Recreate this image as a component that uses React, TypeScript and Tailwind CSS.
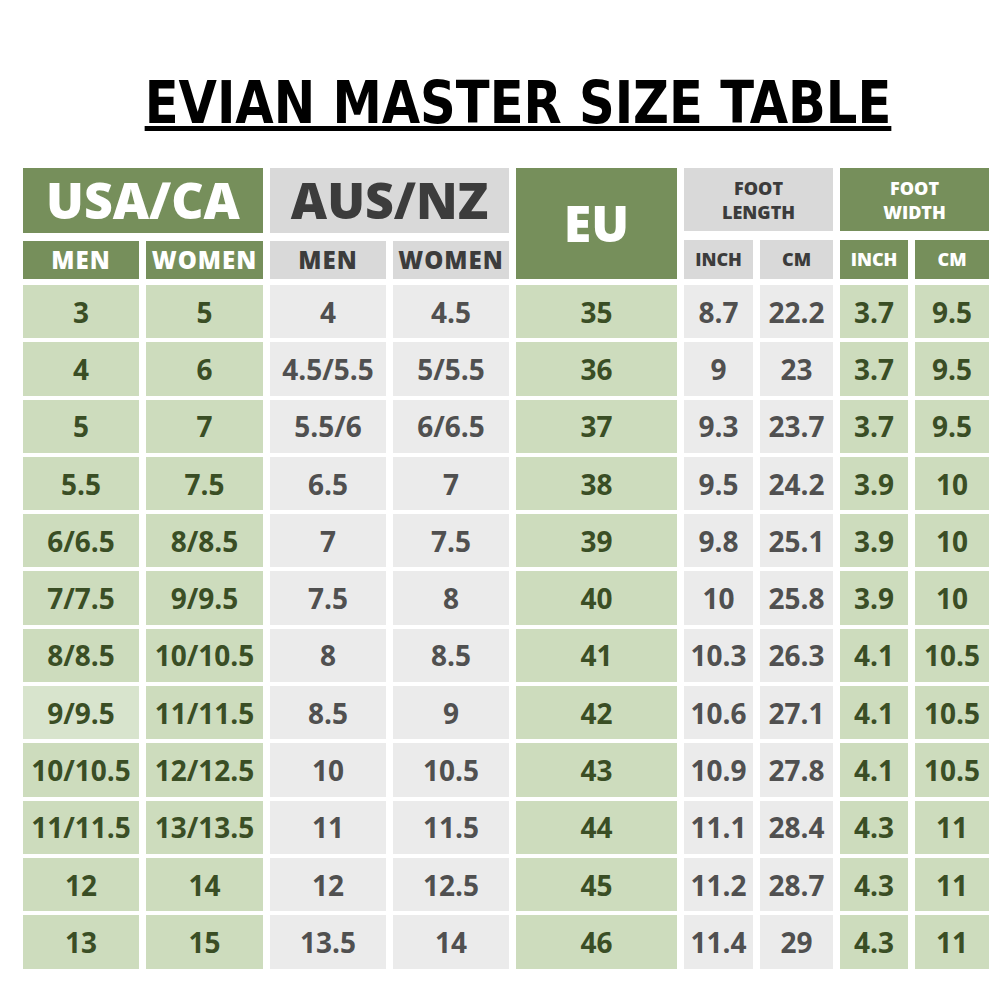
const usaMen = ['3', '4', '5', '5.5', '6/6.5', '7/7.5', '8/8.5', '9/9.5', '10/10.5', '11/11.5', '12', '13']
const usaWomen = ['5', '6', '7', '7.5', '8/8.5', '9/9.5', '10/10.5', '11/11.5', '12/12.5', '13/13.5', '14', '15']
const ausMen = ['4', '4.5/5.5', '5.5/6', '6.5', '7', '7.5', '8', '8.5', '10', '11', '12', '13.5']
const ausWomen = ['4.5', '5/5.5', '6/6.5', '7', '7.5', '8', '8.5', '9', '10.5', '11.5', '12.5', '14']
const eu = ['35', '36', '37', '38', '39', '40', '41', '42', '43', '44', '45', '46']
const lenInch = ['8.7', '9', '9.3', '9.5', '9.8', '10', '10.3', '10.6', '10.9', '11.1', '11.2', '11.4']
const lenCm = ['22.2', '23', '23.7', '24.2', '25.1', '25.8', '26.3', '27.1', '27.8', '28.4', '28.7', '29']
const widInch = ['3.7', '3.7', '3.7', '3.9', '3.9', '3.9', '4.1', '4.1', '4.1', '4.3', '4.3', '4.3']
const widCm = ['9.5', '9.5', '9.5', '10', '10', '10', '10.5', '10.5', '10.5', '11', '11', '11']

const cols = 'grid grid-cols-[116px_117px_116px_116px_161px_69px_73px_68px_74px] gap-x-[7px]'

function Green({ v, light }: { v: string; light?: boolean }) {
  return (
    <div
      className={`h-[53.3px] flex items-center justify-center text-[28px] font-bold text-[#3a4e25] ${light ? 'bg-[#d8e4cd]' : 'bg-[#cddcbd]'}`}
    >
      {v}
    </div>
  )
}

function Gray({ v }: { v: string }) {
  return (
    <div className="h-[53.3px] flex items-center justify-center bg-[#ebebeb] text-[28px] font-bold text-[#505050]">
      {v}
    </div>
  )
}

export default function App() {
  return (
    <div className="w-[1000px] h-[1000px] bg-white" style={{ fontFamily: '"Open Sans", sans-serif' }}>
      {/* Title */}
      <div className="flex justify-center pt-[80px] pl-[36px]">
        <h1
          className="inline-block border-b-[5px] border-black text-[58px] font-bold leading-[46px] text-black scale-x-[0.95]"
          style={{ fontFamily: '"DejaVu Sans Condensed", "DejaVu Sans", sans-serif' }}
        >
          EVIAN MASTER SIZE TABLE
        </h1>
      </div>

      <div className="pl-[23px] pt-[37px]">
        {/* Header */}
        <div className={`${cols} grid-rows-[65px_38px] gap-y-[8px]`}>
          <div className="col-span-2 bg-[#768f5b] flex items-center justify-center text-[50px] font-extrabold text-white">
            USA/CA
          </div>
          <div className="col-span-2 bg-[#d9d9d9] flex items-center justify-center text-[50px] font-extrabold text-[#3c3c3c]">
            AUS/NZ
          </div>
          <div className="row-span-2 bg-[#768f5b] flex items-center justify-center text-[50px] font-extrabold text-white">
            EU
          </div>
          <div className="col-span-2 bg-[#d9d9d9] flex flex-col items-center justify-center text-[18px] leading-[24px] font-extrabold text-[#3c3c3c] mb-[2px]">
            <span>FOOT</span>
            <span>LENGTH</span>
          </div>
          <div className="col-span-2 bg-[#768f5b] flex flex-col items-center justify-center text-[18px] leading-[24px] font-extrabold text-white mb-[2px]">
            <span>FOOT</span>
            <span>WIDTH</span>
          </div>

          <div className="bg-[#768f5b] flex items-center justify-center text-[24px] font-extrabold tracking-[1px] text-white">MEN</div>
          <div className="bg-[#768f5b] flex items-center justify-center text-[24px] font-extrabold tracking-[1px] text-white">WOMEN</div>
          <div className="bg-[#d9d9d9] flex items-center justify-center text-[24px] font-extrabold tracking-[1px] text-[#3c3c3c]">MEN</div>
          <div className="bg-[#d9d9d9] flex items-center justify-center text-[24px] font-extrabold tracking-[1px] text-[#3c3c3c]">WOMEN</div>
          <div className="bg-[#d9d9d9] flex items-center justify-center text-[18px] font-extrabold text-[#3c3c3c] -mt-[1px]">INCH</div>
          <div className="bg-[#d9d9d9] flex items-center justify-center text-[18px] font-extrabold text-[#3c3c3c] -mt-[1px]">CM</div>
          <div className="bg-[#768f5b] flex items-center justify-center text-[18px] font-extrabold text-white -mt-[1px]">INCH</div>
          <div className="bg-[#768f5b] flex items-center justify-center text-[18px] font-extrabold text-white -mt-[1px]">CM</div>
        </div>

        {/* Body */}
        <div className={`${cols} gap-y-[4px] mt-[6px]`}>
          {eu.map((_, i) => (
            <>
              <Green key={`um${i}`} v={usaMen[i]} light={i === 7} />
              <Green key={`uw${i}`} v={usaWomen[i]} />
              <Gray key={`am${i}`} v={ausMen[i]} />
              <Gray key={`aw${i}`} v={ausWomen[i]} />
              <Green key={`eu${i}`} v={eu[i]} />
              <Gray key={`li${i}`} v={lenInch[i]} />
              <Gray key={`lc${i}`} v={lenCm[i]} />
              <Green key={`wi${i}`} v={widInch[i]} />
              <Green key={`wc${i}`} v={widCm[i]} />
            </>
          ))}
        </div>
      </div>
    </div>
  )
}
